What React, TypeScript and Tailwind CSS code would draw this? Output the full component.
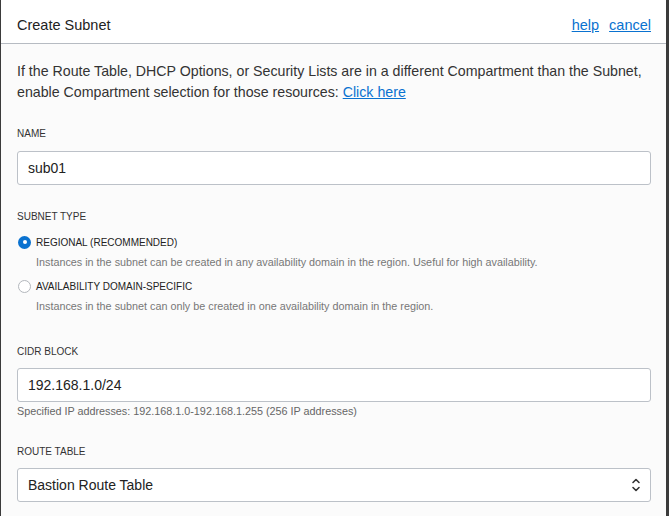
import React from 'react';

const font = { fontFamily: '"Liberation Sans", Arial, sans-serif' };

const Label: React.FC<{ text: string; className?: string }> = ({ text, className }) => (
  <div className={`text-[10px] leading-[14px] text-[#333] uppercase ${className ?? ''}`}>{text}</div>
);

const Radio: React.FC<{ checked?: boolean }> = ({ checked }) =>
  checked ? (
    <span className="w-[13px] h-[13px] rounded-full bg-[#0a72d0] flex items-center justify-center shrink-0">
      <span className="w-[4px] h-[4px] rounded-full bg-white" />
    </span>
  ) : (
    <span className="w-[13px] h-[13px] rounded-full border border-[#b3b7bc] bg-white shrink-0" />
  );

export default function App() {
  return (
    <div className="w-[669px] h-[516px] bg-[#3b3b3b] overflow-hidden" style={font}>
      <div className="ml-[1px] w-[665px] h-[516px] bg-[#fbfbfb] flex flex-col">
        {/* Header */}
        <div className="h-[44px] shrink-0 bg-white border-b border-[#b6bbc2] flex items-center justify-between pt-[8px] pl-[16px] pr-[15px]">
          <span className="text-[14.5px] text-[#222]">Create Subnet</span>
          <div className="flex gap-[10px] text-[14.5px]">
            <a className="text-[#0a72d0] underline">help</a>
            <a className="text-[#0a72d0] underline">cancel</a>
          </div>
        </div>

        {/* Body */}
        <div className="pl-[16px] pr-[15px]">
          <p className="mt-[17px] text-[14.2px] leading-[21px] text-[#333]">
            If the Route Table, DHCP Options, or Security Lists are in a different Compartment than the Subnet,
            enable Compartment selection for those resources: <a className="text-[#0a72d0] underline">Click here</a>
          </p>

          <Label text="Name" className="mt-[24px]" />
          <div className="mt-[10px] h-[34px] bg-white border border-[#bcc1c8] rounded-[3px] flex items-center px-[10px] text-[14px] text-[#222]">
            sub01
          </div>

          <Label text="Subnet Type" className="mt-[25px]" />
          <div className="mt-[10px] flex items-center gap-[5px] h-[16px] pl-[1px]">
            <Radio checked />
            <span className="text-[10px] text-[#222]">REGIONAL (RECOMMENDED)</span>
          </div>
          <div className="mt-[5px] ml-[19px] text-[10.8px] leading-[14px] text-[#777]">
            Instances in the subnet can be created in any availability domain in the region. Useful for high availability.
          </div>
          <div className="mt-[9px] flex items-center gap-[5px] h-[16px] pl-[1px]">
            <Radio />
            <span className="text-[10px] text-[#222]">AVAILABILITY DOMAIN-SPECIFIC</span>
          </div>
          <div className="mt-[5px] ml-[19px] text-[10.8px] leading-[14px] text-[#777]">
            Instances in the subnet can only be created in one availability domain in the region.
          </div>

          <Label text="CIDR Block" className="mt-[32px]" />
          <div className="mt-[9px] h-[34px] bg-white border border-[#bcc1c8] rounded-[3px] flex items-center px-[10px] text-[14px] text-[#222]">
            192.168.1.0/24
          </div>
          <div className="mt-[2px] text-[10.8px] leading-[14px] text-[#666]">
            Specified IP addresses: 192.168.1.0-192.168.1.255 (256 IP addresses)
          </div>

          <Label text="Route Table" className="mt-[27px]" />
          <div className="mt-[9px] h-[34px] bg-white border border-[#bcc1c8] rounded-[3px] flex items-center justify-between pl-[10px] pr-[9px] text-[14px] text-[#222]">
            <span>Bastion Route Table</span>
            <svg width="10" height="16" viewBox="0 0 10 16" fill="none" stroke="#333" strokeWidth="1.6" strokeLinecap="round" strokeLinejoin="round">
              <path d="M2 5.5 L5 2.5 L8 5.5" />
              <path d="M2 10.5 L5 13.5 L8 10.5" />
            </svg>
          </div>
        </div>
      </div>
    </div>
  );
}
